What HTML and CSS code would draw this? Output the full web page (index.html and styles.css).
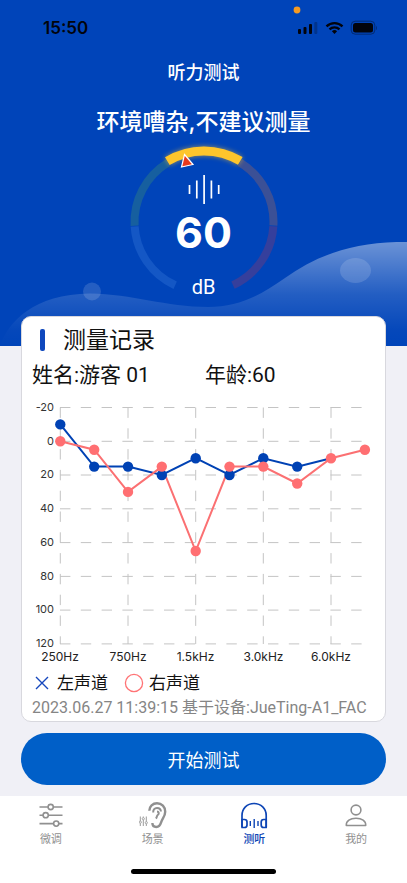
FILE: index.html
```html
<!DOCTYPE html>
<html lang="zh-CN">
<head>
<meta charset="utf-8">
<meta name="viewport" content="width=device-width, initial-scale=1">
<title>听力测试</title>
<link rel="stylesheet" href="styles.css">
</head>
<body>
<header class="hero">
  <svg class="hero-wave" viewBox="0 0 407 104" preserveAspectRatio="none" aria-hidden="true">
    <defs>
      <linearGradient id="wave" gradientUnits="userSpaceOnUse" x1="0" y1="0" x2="0" y2="104">
        <stop offset="0" stop-color="#fff" stop-opacity=".42"/>
        <stop offset=".5" stop-color="#fff" stop-opacity=".14"/>
        <stop offset=".85" stop-color="#fff" stop-opacity=".02"/>
        <stop offset="1" stop-color="#fff" stop-opacity="0"/>
      </linearGradient>
    </defs>
    <path fill="url(#wave)" d="M0 104C8 80 34 52 90 51.500C132 52 166 65 208 65C238 65 258 55 285 36C318 12 358-1 407 0V104Z"/>
    <circle cx="92" cy="49.500" r="9" fill="#fff" fill-opacity=".14"/>
    <ellipse cx="355.500" cy="28.500" rx="15.500" ry="12.500" fill="#fff" fill-opacity=".14"/>
  </svg>

  <div class="status">
    <span class="status-time">15:50</span>
    <svg class="status-icons" width="84" height="32" viewBox="0 0 84 32" aria-hidden="true">
      <circle cx="4" cy="4" r="3.400" fill="#f59a23"/>
      <g fill="#02040c">
        <rect x="5" y="23" width="3" height="5" rx="1"/>
        <rect x="10.500" y="21" width="3" height="7" rx="1"/>
        <rect x="16" y="18" width="3" height="10" rx="1"/>
        <rect x="21.300" y="16" width="3" height="12" rx="1" opacity=".25"/>
        <path d="M41.500 28l-2.600-2.700a3.800 3.800 0 0 1 5.200 0z"/>
        <rect x="60" y="17" width="20" height="9.500" rx="2.500"/>
        <path d="M83.200 20v4c1.300-.6 1.300-3.400 0-4z" opacity=".4"/>
      </g>
      <g fill="none" stroke="#02040c" stroke-width="2.300">
        <path d="M33.500 20.300a11.500 11.500 0 0 1 16 0M36.500 23.300a7.200 7.200 0 0 1 10 0"/>
        <rect x="58.200" y="15.200" width="23.600" height="13" rx="4" stroke-width="1" opacity=".4"/>
      </g>
    </svg>
  </div>

  <h1 class="page-title">听力测试</h1>
  <p class="notice">环境嘈杂,不建议测量</p>

  <div class="gauge">
    <svg class="gauge-ring" width="160" height="160" viewBox="0 0 160 160" aria-hidden="true">
      <defs>
        <filter id="glow" x="-20%" y="-20%" width="140%" height="140%">
          <feGaussianBlur stdDeviation="2.500"/>
        </filter>
      </defs>
      <g fill="none" stroke-width="8" stroke-dasharray="61.800 360">
        <circle cx="80" cy="80" r="69.500" pathLength="360" stroke="#1457c5" transform="rotate(114.500 80 80)"/>
        <circle cx="80" cy="80" r="69.500" pathLength="360" stroke="#165f9f" transform="rotate(176.900 80 80)"/>
        <circle cx="80" cy="80" r="69.500" pathLength="360" stroke="#3b5096" transform="rotate(-58.900 80 80)"/>
        <circle cx="80" cy="80" r="69.500" pathLength="360" stroke="#353f9c" transform="rotate(3.500 80 80)"/>
        <circle cx="80" cy="80" r="71" pathLength="360" stroke="#fdc42b" stroke-width="9" opacity=".6" transform="rotate(-121.100 80 80)" filter="url(#glow)"/>
        <circle cx="80" cy="80" r="71" pathLength="360" stroke="#fec52c" stroke-width="9" transform="rotate(-121.100 80 80)"/>
      </g>
      <path d="M60.500 12.500L69 22.500L57.500 25Z" fill="#e8391d" stroke="#fff" stroke-width="1.200"/>
      <path d="M65.500 43v9M72.800 38.500v18M80.100 33v29M87.400 38.500v18M94.700 43v9" stroke="#fff" stroke-width="1.700"/>
    </svg>
    <div class="gauge-text">
      <strong class="gauge-value">60</strong>
      <span class="gauge-unit">dB</span>
    </div>
  </div>
</header>

<main class="content">
  <section class="card">
    <h2 class="card-title">测量记录</h2>
    <div class="person">
      <span>姓名:游客 01</span>
      <span>年龄:60</span>
    </div>

    <svg class="chart" viewBox="0 0 363 276" role="img" aria-label="测量记录">
      <g class="grid">
        <path d="M38 17.500H342M38 51.300H342M38 85H342M38 118.800H342M38 152.600H342M38 186.400H342M38 220.100H342M38 253.900H342"/>
        <path d="M38.300 17.500V254M106 17.500V254M173.700 17.500V254M241.300 17.500V254M309 17.500V254"/>
      </g>
      <g class="y-labels">
        <text x="32" y="20.500">-20</text>
        <text x="32" y="54.500">0</text>
        <text x="32" y="88">20</text>
        <text x="32" y="122">40</text>
        <text x="32" y="155.500">60</text>
        <text x="32" y="189.500">80</text>
        <text x="32" y="223">100</text>
        <text x="32" y="257">120</text>
      </g>
      <g class="x-labels">
        <text x="38" y="271">250Hz</text>
        <text x="106" y="271">750Hz</text>
        <text x="173.500" y="271">1.5kHz</text>
        <text x="241.500" y="271">3.0kHz</text>
        <text x="309" y="271">6.0kHz</text>
      </g>
      <polyline class="line left" points="38.300,34.400 72.200,76.600 106,76.600 139.800,85 173.700,68.200 207.500,85 241.300,68.200 275.200,76.600 309,68.200"/>
      <polyline class="line right" points="38.300,51.300 72.200,59.700 106,101.900 139.800,76.600 173.700,161 207.500,76.600 241.300,76.600 275.200,93.500 309,68.200 342.900,59.700"/>
      <g class="dots-left">
        <circle cx="38.300" cy="34.400" r="5.200"/><circle cx="72.200" cy="76.600" r="5.200"/><circle cx="106" cy="76.600" r="5.200"/><circle cx="139.800" cy="85" r="5.200"/><circle cx="173.700" cy="68.200" r="5.200"/><circle cx="207.500" cy="85" r="5.200"/><circle cx="241.300" cy="68.200" r="5.200"/><circle cx="275.200" cy="76.600" r="5.200"/>
      </g>
      <g class="dots-right">
        <circle cx="38.300" cy="51.300" r="5.200"/><circle cx="72.200" cy="59.700" r="5.200"/><circle cx="106" cy="101.900" r="5.200"/><circle cx="139.800" cy="76.600" r="5.200"/><circle cx="173.700" cy="161" r="5.200"/><circle cx="207.500" cy="76.600" r="5.200"/><circle cx="241.300" cy="76.600" r="5.200"/><circle cx="275.200" cy="93.500" r="5.200"/><circle cx="309" cy="68.200" r="5.200"/><circle cx="342.900" cy="59.700" r="5.200"/>
      </g>
    </svg>

    <div class="legend">
      <span class="legend-item">
        <svg width="20" height="20" viewBox="0 0 20 20" aria-hidden="true"><path d="M4 4l12 12M16 4L4 16" stroke="#1547bd" stroke-width="1.400"/></svg>
        左声道
      </span>
      <span class="legend-item">
        <svg width="20" height="20" viewBox="0 0 20 20" aria-hidden="true"><circle cx="10" cy="10" r="8.600" fill="none" stroke="#ff7375" stroke-width="1.300"/></svg>
        右声道
      </span>
    </div>
    <p class="record-meta">2023.06.27 11:39:15 基于设备:JueTing-A1_FAC</p>
  </section>

  <button class="start" type="button">开始测试</button>
</main>

<footer class="bottom">
  <nav class="tabs">
    <a class="tab" href="#tune">
      <svg width="28" height="28" viewBox="0 0 28 28" fill="none" stroke="currentColor" stroke-width="1.600" aria-hidden="true">
        <path d="M2.500 6H11M16.500 6H25.500M2.500 14.200H6M11.500 14.200H25.500M2.500 22.600H16.500M22 22.600H25.500"/>
        <circle cx="13.700" cy="6" r="2.600"/><circle cx="8.700" cy="14.200" r="2.600"/><circle cx="19.200" cy="22.600" r="2.600"/>
      </svg>
      微调
    </a>
    <a class="tab" href="#scene">
      <svg width="28" height="28" viewBox="0 0 28 28" fill="none" stroke="currentColor" aria-hidden="true">
        <path stroke-width="2.400" d="M10.300 9.800C10.300 5.500 13.800 2.300 18 2.300C22.800 2.300 26.200 5.900 26.200 10.700C26.200 15.200 23.500 17.400 22.400 20.600C21.400 23.800 19.900 26 17.300 26C14.900 26 13.400 24.400 13.400 22"/>
        <path stroke-width="2" d="M14.200 11.500C14 8.500 15.700 6.900 18 6.900C20.400 6.900 21.900 8.600 21.900 10.600M18 10.600C19.900 10.600 20.300 12.800 19 13.700C17.400 14.800 18.200 16.300 16.800 17.500"/>
        <path stroke-width=".9" d="M1.300 15.500V20M1.300 22.500V25M4.300 15.500V16.500M4.300 19V25M7.300 15.500V20.500M7.300 23V25"/>
        <circle cx="1.300" cy="21.200" r="1.100" stroke-width=".8"/><circle cx="4.300" cy="17.700" r="1.100" stroke-width=".8"/><circle cx="7.300" cy="21.700" r="1.100" stroke-width=".8"/>
      </svg>
      场景
    </a>
    <a class="tab active" href="#test" aria-current="page">
      <svg width="28" height="28" viewBox="0 0 28 28" fill="none" stroke="currentColor" stroke-width="1.700" aria-hidden="true">
        <path d="M2 26V14.500C2 7.500 7 2.500 14 2.500S26.200 7.500 26.200 14.500V26"/>
        <path stroke-linejoin="round" d="M2 18.500H4.500Q7 18.500 7 21V24Q7 26.500 4.500 26.500H2ZM26.200 18.500H23.700Q21.200 18.500 21.200 21V24Q21.200 26.500 23.700 26.500H26.200Z"/>
        <path stroke-width="1.400" d="M10.300 20V25M14.200 18V27M18 20V25"/>
      </svg>
      测听
    </a>
    <a class="tab" href="#mine">
      <svg width="28" height="28" viewBox="0 0 28 28" fill="none" stroke="currentColor" stroke-width="1.600" aria-hidden="true">
        <circle cx="14" cy="9" r="4.900"/>
        <path stroke-linejoin="round" d="M4.300 24.500C4 19.700 8.200 17.300 14 17.300S24 19.700 23.700 24.500Z"/>
      </svg>
      我的
    </a>
  </nav>
  <div class="home-indicator"></div>
</footer>
</body>
</html>
```
FILE: styles.css
```css
* {
  box-sizing: border-box;
}

body {
  margin: 0;
  min-height: 100vh;
  display: flex;
  flex-direction: column;
  background: #f0f0f6;
  color: #111;
  font-family: Inter, "Noto Sans CJK SC", sans-serif;
}

h1,
h2,
p {
  margin: 0;
}

.hero {
  position: relative;
  display: flex;
  flex-direction: column;
  align-items: center;
  padding-bottom: 44px;
  background: #0044b9;
  color: #fff;
}

.hero-wave {
  position: absolute;
  left: 0;
  bottom: 0;
  width: 100%;
  height: 104px;
}

.status {
  width: 100%;
  display: flex;
  justify-content: space-between;
  padding: 6px 30px 0 43px;
}

.status-time {
  padding-top: 12px;
  color: #02040c;
  font-size: 17px;
  font-weight: 600;
  line-height: 20px;
}

.page-title {
  margin-top: 22px;
  font-size: 18px;
  font-weight: 500;
  line-height: 26px;
}

.notice {
  margin-top: 18px;
  font-size: 23px;
  font-weight: 500;
  line-height: 36px;
}

.gauge {
  display: grid;
  margin-top: 2px;
}

.gauge-ring,
.gauge-text {
  grid-area: 1 / 1;
}

.gauge-text {
  z-index: 1;
  display: flex;
  flex-direction: column;
  align-items: center;
  padding-top: 66px;
}

.gauge-value {
  font-size: 43px;
  font-weight: 700;
  line-height: 48px;
}

.gauge-unit {
  margin-top: 19px;
  font-family: Roboto, sans-serif;
  font-size: 20px;
  line-height: 24px;
}

.content {
  position: relative;
  display: flex;
  flex-direction: column;
  margin-top: -30px;
  padding: 0 21px 11px;
}

.card {
  padding: 8px 0 1px;
  border: 1px solid #d8d8de;
  border-radius: 10px;
  background: #fff;
}

.card-title {
  display: flex;
  align-items: center;
  gap: 18px;
  padding-left: 18px;
  font-size: 23px;
  font-weight: 400;
  line-height: 30px;
}

.card-title::before {
  content: "";
  width: 5px;
  height: 22px;
  border-radius: 2px;
  background: #0f48bd;
}

.person {
  display: grid;
  grid-template-columns: 49% 1fr;
  margin-top: 5px;
  padding-left: 10px;
  font-family: Roboto, "Noto Sans CJK SC", sans-serif;
  font-size: 21px;
  line-height: 30px;
}

.chart {
  display: block;
  width: 100%;
}

.grid path {
  fill: none;
  stroke: #c4c4c4;
  stroke-width: 1;
  stroke-dasharray: 10.4 10.4;
}

.y-labels {
  fill: #333;
  font-size: 11px;
  text-anchor: end;
}

.x-labels {
  fill: #222;
  font-size: 12px;
  text-anchor: middle;
}

.line {
  fill: none;
  stroke-width: 2;
}

.left {
  stroke: #0042b4;
}

.right {
  stroke: #fb7072;
}

.dots-left {
  fill: #0042b4;
}

.dots-right {
  fill: #ff6f72;
}

.legend {
  display: flex;
  gap: 16px;
  margin-top: 5px;
  padding-left: 10px;
}

.legend-item {
  display: flex;
  align-items: center;
  gap: 5px;
  font-size: 17px;
  line-height: 24px;
}

.record-meta {
  margin-top: 1px;
  padding-left: 10px;
  color: #858585;
  font-family: Roboto, "Noto Sans CJK SC", sans-serif;
  font-size: 16px;
  line-height: 24px;
  white-space: nowrap;
}

.start {
  height: 52px;
  margin-top: 11px;
  border: 0;
  border-radius: 26px;
  background: #005fc8;
  color: #fff;
  font: inherit;
  font-size: 18px;
}

.bottom {
  margin-top: auto;
  padding: 5px 0 9px;
  background: #fff;
}

.tabs {
  display: grid;
  grid-template-columns: repeat(4, 1fr);
}

.tab {
  display: flex;
  flex-direction: column;
  align-items: center;
  gap: 3px;
  color: #909090;
  font-size: 11px;
  line-height: 14px;
  text-decoration: none;
}

.active {
  color: #0d45b5;
  font-weight: 500;
}

.home-indicator {
  width: 145px;
  height: 5px;
  margin: 23px auto 0;
  border-radius: 3px;
  background: #000;
}
```
